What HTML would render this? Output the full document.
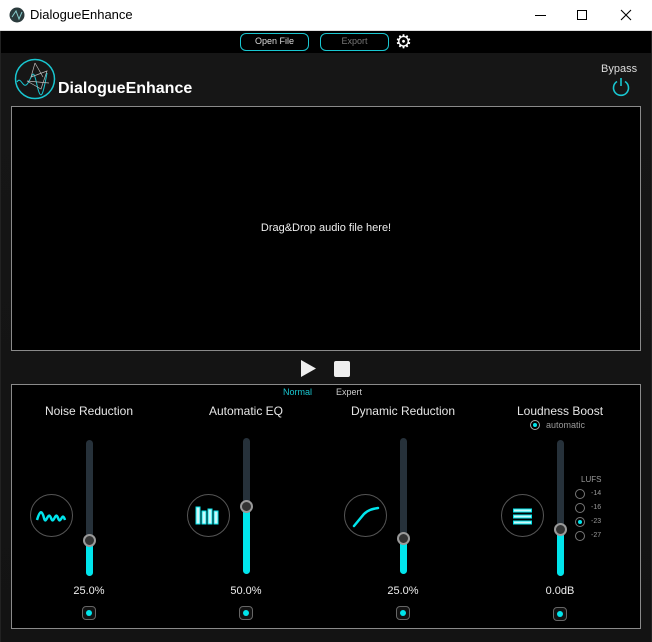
<!DOCTYPE html>
<html><head><meta charset="utf-8"><style>
*{margin:0;padding:0;box-sizing:border-box}
body{width:652px;height:642px;overflow:hidden;background:#0e0e0e;font-family:"Liberation Sans",sans-serif;position:relative}
.abs{position:absolute}
.title{left:0;top:0;width:652px;height:31px;background:#fff;border-bottom:1px solid #ddd}
.ttext{left:30px;top:7px;font-size:13px;color:#000}
.bg{left:1px;top:53px;width:650px;height:589px;background:linear-gradient(#161616,#131313)}
.btn{top:33px;height:18px;width:69px;border:1.5px solid #19c6d0;border-radius:6px;font-size:9px;text-align:center;line-height:15px;color:#ddd;background:#000}
.box{border:1px solid #8a8a8a;background:#000}
.hd{font-size:12px;color:#e6e6e6;width:160px;text-align:center;top:404px}
.track{width:7px;top:440px;height:136px;border-radius:4px;background:#26313a}
.fill{width:7px;border-radius:4px;background:#00e5ec}
.knob{width:13px;height:13px;border-radius:50%;background:#333;border:2px solid #999}
.val{font-size:11px;color:#eee;width:60px;text-align:center;top:585px}
.tog{width:14px;height:14px;top:606px;border:1.5px solid #666;border-radius:4px;background:#111}
.tog::after{content:"";position:absolute;left:3px;top:3px;width:6px;height:6px;border-radius:50%;background:#00e5ec}
.ic{width:43px;height:43px;border-radius:50%;border:1px solid #555;top:494px}
.rad{width:10px;height:10px;border-radius:50%;border:1px solid #777}
.lf{font-size:7px;color:#999}
</style></head><body>
<div class="abs title"></div>
<svg class="abs" style="left:9px;top:7px" width="16" height="16"><circle cx="8" cy="8" r="7.5" fill="#2a3a3c"/><path d="M3 10 L7 4 L10 12 L13 5" stroke="#8cc" fill="none" stroke-width="1"/></svg>
<div class="abs ttext">DialogueEnhance</div>
<div class="abs" style="left:535px;top:15px;width:11px;height:1px;background:#000"></div>
<div class="abs" style="left:577px;top:10px;width:10px;height:10px;border:1px solid #000"></div>
<svg class="abs" style="left:620px;top:9px" width="12" height="12"><path d="M1 1 L11 11 M11 1 L1 11" stroke="#000" stroke-width="1.1"/></svg>
<div class="abs" style="left:0;top:31px;width:652px;height:611px;background:#000;border-left:1px solid #222;border-right:1px solid #222"></div>
<div class="abs bg"></div>
<div class="abs btn" style="left:240px">Open File</div>
<div class="abs btn" style="left:320px;color:#777">Export</div>
<div class="abs" style="left:395px;top:31px;font-size:19px;color:#fff">⚙</div>
<svg class="abs" style="left:13px;top:57px" width="44" height="44"><circle cx="22" cy="22" r="19.5" fill="none" stroke="#19c6d0" stroke-width="1.5"/><path d="M4 25 C8 18 10 34 15 26 S20 10 24 28 S30 38 34 16" stroke="#19c6d0" fill="none"/><path d="M22 6 L18 20 L34 14 L28 32 L14 24 L36 26 M22 6 L30 20" stroke="#bbb" fill="none" stroke-width=".7"/></svg>
<div class="abs" style="left:58px;top:80px;font-size:16px;font-weight:bold;color:#fff">DialogueEnhance</div>
<div class="abs" style="left:601px;top:63px;font-size:11px;color:#ddd">Bypass</div>
<svg class="abs" style="left:611px;top:77px" width="20" height="20"><path d="M6 4.5 A7.5 7.5 0 1 0 14 4.5" stroke="#19c6d0" stroke-width="1.6" fill="none"/><line x1="10" y1="1" x2="10" y2="9" stroke="#19c6d0" stroke-width="1.6"/></svg>
<div class="abs box" style="left:11px;top:106px;width:630px;height:245px"></div>
<div class="abs" style="left:11px;top:222px;width:630px;text-align:center;font-size:11px;color:#eee">Drag&amp;Drop audio file here!</div>
<svg class="abs" style="left:300px;top:359px" width="17" height="19"><path d="M1 1 L16 9.5 L1 18Z" fill="#eee"/></svg>
<div class="abs" style="left:334px;top:361px;width:16px;height:16px;background:#eee;border-radius:2px"></div>
<div class="abs box" style="left:11px;top:384px;width:630px;height:245px"></div>
<div class="abs" style="left:283px;top:387px;font-size:9px;color:#19c6d0">Normal</div>
<div class="abs" style="left:336px;top:387px;font-size:9px;color:#ccc">Expert</div>

<div class="abs hd" style="left:9px">Noise Reduction</div>
<div class="abs hd" style="left:166px">Automatic EQ</div>
<div class="abs hd" style="left:323px">Dynamic Reduction</div>
<div class="abs hd" style="left:480px">Loudness Boost</div>
<div class="abs rad" style="left:530px;top:420px;border-color:#aaa"><div style="margin:2px;width:4px;height:4px;border-radius:50%;background:#00e5ec"></div></div>
<div class="abs" style="left:546px;top:420px;font-size:9px;color:#999">automatic</div>

<div class="abs track" style="left:86px"></div><div class="abs fill" style="left:86px;top:540px;height:36px"></div><div class="abs knob" style="left:83px;top:534px"></div>
<div class="abs track" style="left:243px;top:438px"></div><div class="abs fill" style="left:243px;top:506px;height:68px"></div><div class="abs knob" style="left:240px;top:500px"></div>
<div class="abs track" style="left:400px;top:438px"></div><div class="abs fill" style="left:400px;top:538px;height:36px"></div><div class="abs knob" style="left:397px;top:532px"></div>
<div class="abs track" style="left:557px"></div><div class="abs fill" style="left:557px;top:530px;height:46px"></div><div class="abs knob" style="left:554px;top:523px"></div>

<div class="abs ic" style="left:30px"></div>
<svg class="abs" style="left:33px;top:506px" width="38" height="20"><path d="M4 14 C7 4 9 4 11 12 S15 4 18 12 S22 4 25 12 S29 4 32 14" stroke="#00e5ec" stroke-width="2.5" fill="none"/></svg>
<div class="abs ic" style="left:187px"></div>
<svg class="abs" style="left:194px;top:505px" width="30" height="22"><g fill="#ccf7f8" stroke="#00e5ec"><rect x="2" y="2" width="4" height="17"/><rect x="8" y="6" width="4" height="13"/><rect x="14" y="4" width="4" height="15"/><rect x="20" y="6" width="4" height="13"/></g></svg>
<div class="abs ic" style="left:344px"></div>
<svg class="abs" style="left:350px;top:503px" width="34" height="28"><path d="M4 23 L14 11 C18 7 22 6 28 5" stroke="#00e5ec" stroke-width="2.5" fill="none" stroke-linecap="round"/></svg>
<div class="abs ic" style="left:501px"></div>
<svg class="abs" style="left:512px;top:506px" width="22" height="22"><g fill="#ccf7f8" stroke="#00e5ec"><rect x="1.5" y="3" width="18" height="3"/><rect x="1.5" y="9" width="18" height="3"/><rect x="1.5" y="15" width="18" height="3"/></g></svg>

<div class="abs lf" style="left:581px;top:475px;font-size:8px">LUFS</div>
<div class="abs rad" style="left:575px;top:489px"></div><div class="abs lf" style="left:591px;top:490px">-14</div>
<div class="abs rad" style="left:575px;top:503px"></div><div class="abs lf" style="left:591px;top:504px">-16</div>
<div class="abs rad" style="left:575px;top:517px"><div style="margin:2px;width:4px;height:4px;border-radius:50%;background:#00e5ec"></div></div><div class="abs lf" style="left:591px;top:518px">-23</div>
<div class="abs rad" style="left:575px;top:531px"></div><div class="abs lf" style="left:591px;top:532px">-27</div>

<div class="abs val" style="left:59px">25.0%</div>
<div class="abs val" style="left:216px">50.0%</div>
<div class="abs val" style="left:373px">25.0%</div>
<div class="abs val" style="left:530px">0.0dB</div>
<div class="abs tog" style="left:82px"></div>
<div class="abs tog" style="left:239px"></div>
<div class="abs tog" style="left:396px"></div>
<div class="abs tog" style="left:553px;top:607px"></div>
</body></html>
